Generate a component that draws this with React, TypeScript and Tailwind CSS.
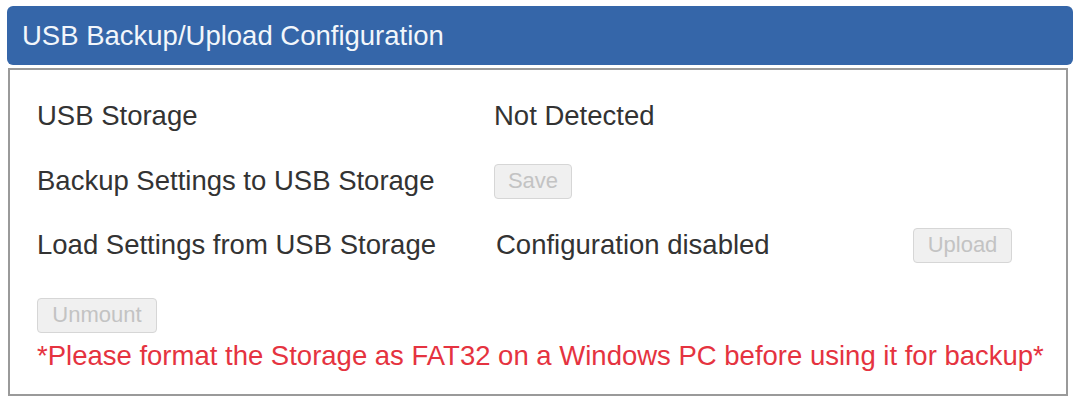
import { FC } from "react";

const DisabledButton: FC<{ label: string; width: string }> = ({ label, width }) => (
  <button
    disabled
    className={`${width} h-[35px] rounded-[4px] border border-[#d6d6d6] bg-[#f0f0f0] text-[22px] leading-none text-[#c3c3c3]`}
  >
    {label}
  </button>
);

const App: FC = () => {
  return (
    <div
      className="w-[1076px] h-[399px] bg-white pl-[7px] pt-[6px]"
      style={{ fontFamily: '"Liberation Sans", Arial, sans-serif' }}
    >
      <div className="w-[1066px] h-[59px] flex items-center rounded-[6px] bg-[#3566a9] px-[15px]">
        <h1 className="text-[27.5px] text-[#f2f6fb]">
          USB Backup/Upload Configuration
        </h1>
      </div>

      <div className="mt-[3px] ml-[1px] w-[1060px] h-[328px] border-2 border-[#9a9a9a] pl-[27px] pt-[13px] text-[27.5px] text-[#333]">
        <div className="flex h-[66px] items-center">
          <span className="w-[457px]">USB Storage</span>
          <span>Not Detected</span>
        </div>

        <div className="flex h-[64px] items-center">
          <span className="w-[457px]">Backup Settings to USB Storage</span>
          <DisabledButton label="Save" width="w-[78px]" />
        </div>

        <div className="flex h-[64px] items-center">
          <span className="w-[459px]">Load Settings from USB Storage</span>
          <span className="w-[417px]">Configuration disabled</span>
          <DisabledButton label="Upload" width="w-[99px]" />
        </div>

        <div className="mt-[15px]">
          <DisabledButton label="Unmount" width="w-[120px]" />
        </div>

        <p className="mt-[9px] leading-[28px] text-[#e53340]">
          *Please format the Storage as FAT32 on a Windows PC before using it for backup*
        </p>
      </div>
    </div>
  );
};

export default App;
